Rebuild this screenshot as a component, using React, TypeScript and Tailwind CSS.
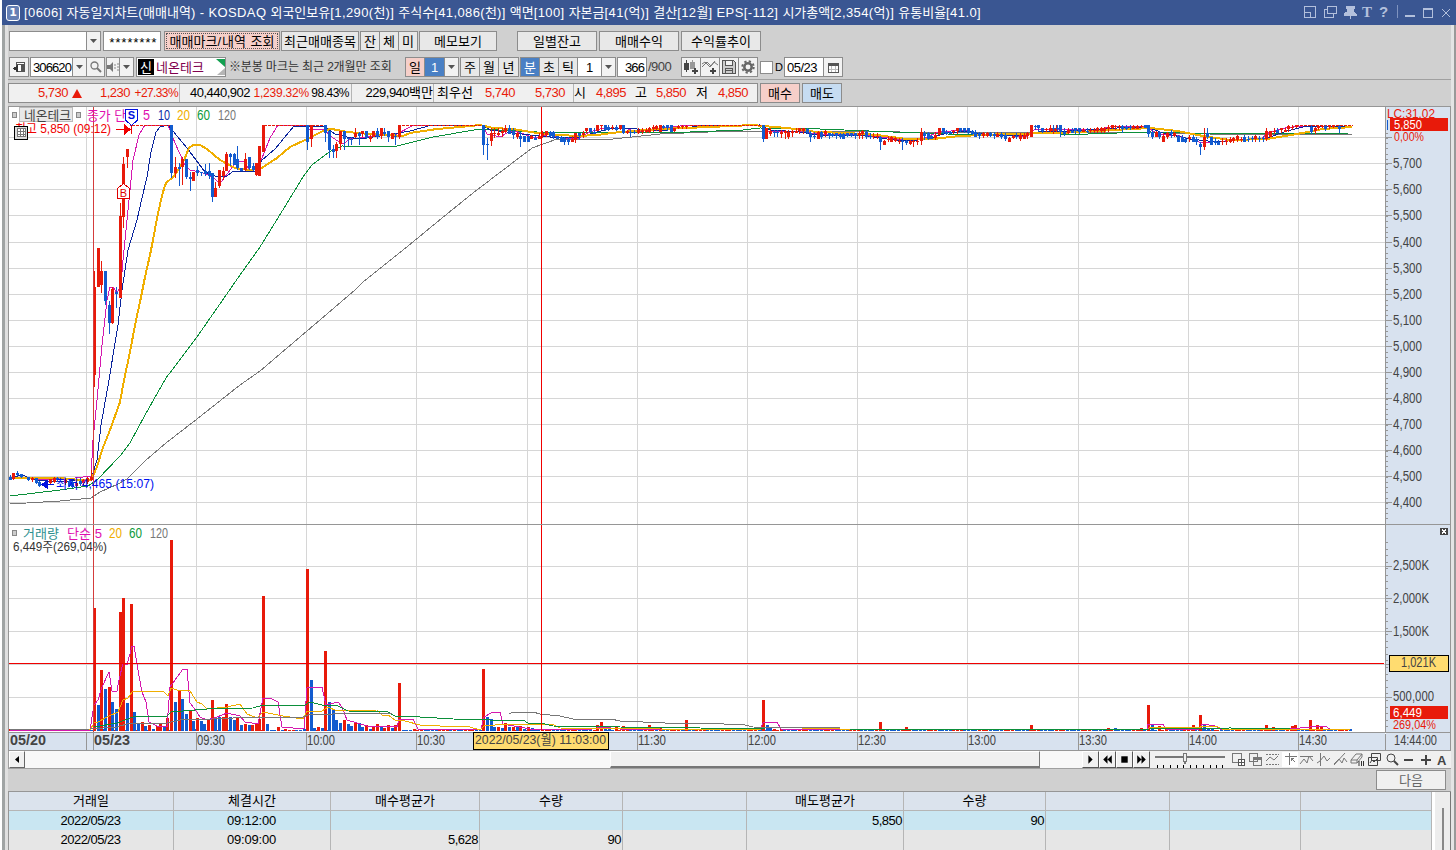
import type { ReactNode } from "react";
import clsx from "clsx";

const UP = "#e81a0a";
const DOWN = "#125bcf";

type Bar = [number, number, number, number, number, "r" | "b"];

// candles: x, body top, body bottom, wick top, wick bottom (thirds of a pixel, per block origin)
const openBars: Bar[] = [
  [283, 560, 825, 513, 860, "r"], [295, 445, 563, 445, 563, "r"], [304, 513, 555, 483, 578, "r"],
  [316, 513, 603, 513, 615, "b"], [328, 615, 670, 602, 700, "b"], [337, 567, 670, 560, 672, "r"],
  [349, 577, 584, 560, 623, "b"], [361, 348, 594, 308, 594, "r"], [370, 191, 350, 172, 385, "r"],
  [382, 148, 173, 148, 205, "r"], [394, 75, 78, 75, 103, "r"], [514, 76, 220, 76, 235, "b"],
  [526, 202, 220, 170, 232, "r"], [537, 200, 205, 190, 258, "b"], [547, 178, 203, 172, 257, "r"],
  [559, 178, 233, 178, 238, "b"], [571, 230, 235, 215, 272, "b"], [580, 215, 242, 215, 242, "r"],
  [592, 210, 218, 198, 227, "b"], [604, 217, 220, 217, 230, "b"], [616, 213, 222, 193, 230, "b"],
  [627, 213, 228, 190, 238, "b"], [637, 218, 290, 218, 305, "b"], [646, 263, 290, 247, 290, "r"],
  [658, 210, 258, 210, 265, "r"], [670, 212, 228, 200, 240, "r"], [679, 162, 213, 155, 213, "r"],
  [691, 163, 173, 160, 200, "b"], [703, 162, 195, 160, 195, "b"], [712, 178, 205, 138, 210, "b"],
  [724, 205, 213, 205, 213, "b"], [736, 178, 210, 160, 215, "r"], [747, 172, 205, 172, 212, "b"],
  [759, 198, 210, 190, 215, "b"], [770, 190, 225, 190, 228, "r"], [777, 138, 228, 138, 228, "r"],
  [31, 1130, 1138, 1125, 1140, "b"], [40, 1120, 1138, 1118, 1140, "r"], [52, 1120, 1125, 1112, 1128, "b"],
  [64, 1122, 1130, 1122, 1134, "b"], [85, 1132, 1142, 1132, 1144, "b"], [97, 1135, 1142, 1132, 1146, "r"],
  [109, 1135, 1150, 1133, 1152, "b"], [118, 1145, 1156, 1142, 1160, "b"], [152, 1138, 1150, 1136, 1154, "r"],
  [164, 1135, 1146, 1132, 1150, "r"], [173, 1135, 1142, 1130, 1145, "b"], [197, 1140, 1150, 1138, 1155, "r"],
  [208, 1142, 1158, 1140, 1162, "b"], [217, 1146, 1160, 1142, 1162, "b"], [229, 1148, 1158, 1144, 1162, "r"],
  [241, 1142, 1150, 1135, 1158, "b"], [251, 1140, 1150, 1136, 1158, "r"], [262, 1134, 1146, 1130, 1150, "r"],
  [273, 1130, 1138, 1110, 1142, "r"],
];

const morningBars: Bar[] = [
  [11, 45, 125, 45, 125, "r"], [142, 45, 97, 45, 120, "b"], [154, 45, 87, 45, 110, "r"],
  [197, 45, 70, 45, 95, "b"], [208, 63, 120, 63, 143, "b"], [220, 117, 125, 105, 143, "b"],
  [229, 103, 125, 95, 143, "r"], [242, 63, 103, 63, 120, "r"], [253, 63, 87, 63, 120, "b"],
  [265, 85, 88, 85, 108, "b"], [274, 86, 89, 80, 103, "b"], [286, 68, 80, 55, 85, "r"],
  [298, 70, 80, 65, 105, "b"], [307, 63, 72, 63, 80, "r"], [319, 63, 83, 63, 88, "b"],
  [331, 80, 87, 75, 95, "r"], [340, 63, 80, 63, 80, "r"], [352, 63, 80, 55, 87, "b"],
  [364, 55, 80, 55, 87, "r"], [374, 65, 72, 55, 80, "b"], [385, 63, 80, 63, 95, "b"],
  [397, 70, 87, 70, 87, "r"], [406, 78, 81, 70, 105, "b"], [418, 45, 80, 45, 87, "r"],
  [670, 45, 105, 45, 135, "b"], [682, 102, 105, 85, 150, "b"], [694, 70, 95, 55, 110, "r"],
  [703, 69, 72, 55, 85, "r"], [715, 68, 75, 55, 80, "r"], [727, 63, 68, 53, 80, "r"],
  [736, 53, 66, 45, 70, "r"], [748, 53, 70, 45, 70, "b"], [760, 63, 75, 55, 87, "b"],
  [772, 68, 80, 65, 85, "r"], [781, 78, 87, 65, 110, "b"], [793, 78, 95, 78, 97, "b"],
  [805, 78, 95, 78, 97, "b"], [814, 78, 87, 75, 88, "r"], [826, 83, 88, 78, 88, "b"],
  [838, 78, 87, 70, 88, "r"], [847, 70, 80, 63, 85, "r"], [859, 63, 75, 63, 80, "r"],
  [870, 65, 78, 63, 80, "b"], [880, 65, 80, 63, 88, "b"], [892, 78, 87, 78, 88, "b"],
  [904, 80, 95, 78, 95, "b"], [913, 85, 97, 80, 105, "b"], [925, 87, 95, 80, 105, "b"],
  [937, 87, 95, 78, 97, "r"], [946, 70, 90, 68, 97, "r"], [958, 70, 80, 68, 88, "b"],
  [970, 68, 75, 63, 83, "r"], [980, 55, 65, 53, 68, "r"], [992, 55, 68, 53, 68, "b"],
  [1003, 65, 70, 55, 72, "b"], [1013, 45, 63, 45, 63, "r"], [1025, 45, 48, 45, 60, "r"],
  [1037, 45, 60, 45, 62, "b"], [1046, 50, 58, 45, 62, "b"], [1058, 50, 54, 45, 60, "r"],
  [1070, 50, 60, 45, 62, "b"], [1080, 45, 57, 45, 60, "r"], [1090, 45, 70, 45, 72, "b"],
  [1103, 63, 70, 60, 72, "r"], [1112, 66, 70, 60, 82, "b"], [1124, 66, 70, 60, 72, "b"],
  [1135, 60, 70, 55, 72, "r"], [1147, 60, 66, 55, 72, "r"], [1158, 60, 66, 55, 70, "r"],
  [1169, 55, 66, 52, 70, "r"], [1180, 50, 56, 45, 66, "r"], [1190, 47, 57, 45, 62, "r"],
];

const noonBars: Bar[] = [
  [0, 45, 65, 45, 65, "r"], [11, 48, 55, 45, 58, "b"], [22, 45, 55, 45, 62, "b"], [34, 45, 66, 45, 66, "b"],
  [43, 55, 65, 53, 66, "r"], [55, 47, 52, 45, 58, "r"], [67, 49, 53, 45, 57, "r"], [79, 47, 50, 45, 57, "r"],
  [310, 45, 87, 45, 95, "b"], [319, 55, 87, 55, 87, "r"], [331, 63, 72, 55, 80, "r"], [342, 65, 68, 60, 80, "b"],
  [352, 65, 68, 60, 80, "b"], [364, 65, 70, 60, 83, "r"], [376, 63, 68, 60, 87, "r"], [385, 65, 80, 60, 87, "r"],
  [397, 63, 70, 60, 80, "r"], [409, 63, 70, 55, 70, "r"], [418, 55, 65, 53, 70, "r"], [430, 55, 63, 53, 70, "r"],
  [442, 57, 68, 53, 70, "b"], [451, 68, 80, 63, 95, "b"], [463, 77, 80, 65, 87, "b"], [475, 65, 87, 63, 87, "r"],
  [485, 65, 80, 63, 87, "b"], [497, 63, 72, 60, 80, "r"], [508, 70, 80, 68, 87, "b"], [518, 72, 78, 68, 80, "b"],
  [530, 70, 80, 68, 87, "b"], [542, 72, 80, 70, 87, "b"], [551, 72, 87, 70, 87, "b"], [563, 70, 78, 68, 80, "b"],
  [575, 70, 78, 68, 80, "b"], [587, 70, 78, 68, 87, "b"], [597, 70, 78, 63, 87, "r"], [607, 63, 72, 60, 87, "r"],
  [619, 65, 80, 60, 87, "b"], [630, 77, 80, 70, 87, "b"], [640, 77, 80, 70, 87, "r"], [652, 77, 80, 70, 87, "r"],
  [661, 80, 95, 78, 120, "b"], [673, 93, 104, 90, 104, "r"], [685, 86, 90, 78, 95, "r"], [695, 80, 95, 78, 95, "r"],
  [706, 85, 93, 80, 95, "r"], [718, 92, 95, 85, 104, "r"], [727, 94, 97, 85, 120, "b"], [740, 93, 98, 90, 105, "b"],
  [751, 93, 103, 90, 105, "r"], [760, 94, 98, 90, 110, "r"], [772, 93, 97, 85, 105, "r"], [784, 67, 95, 55, 105, "r"],
  [793, 68, 78, 63, 90, "b"], [805, 70, 87, 65, 88, "b"], [815, 78, 87, 75, 88, "b"], [826, 75, 85, 65, 88, "r"],
  [838, 55, 75, 53, 75, "r"], [850, 55, 70, 53, 72, "b"], [860, 65, 72, 60, 75, "b"], [870, 65, 70, 63, 72, "b"],
  [880, 64, 68, 60, 72, "r"], [892, 55, 65, 53, 70, "r"], [902, 55, 63, 53, 65, "b"], [914, 55, 63, 53, 68, "b"],
  [925, 55, 70, 53, 72, "b"], [937, 63, 72, 60, 75, "b"], [947, 65, 80, 60, 80, "b"], [958, 70, 80, 65, 87, "b"],
  [970, 70, 80, 65, 83, "r"], [982, 70, 80, 65, 80, "r"], [992, 70, 80, 65, 80, "b"], [1003, 72, 78, 65, 87, "b"],
  [1013, 72, 80, 65, 80, "r"], [1025, 72, 80, 65, 87, "b"], [1036, 75, 87, 70, 95, "b"], [1048, 83, 95, 80, 95, "r"],
  [1060, 78, 83, 75, 87, "r"], [1070, 77, 80, 70, 87, "b"], [1080, 75, 87, 70, 95, "r"], [1092, 75, 87, 70, 87, "r"],
  [1103, 70, 80, 65, 87, "r"], [1114, 45, 80, 45, 80, "r"], [1125, 47, 50, 45, 60, "b"], [1136, 45, 55, 45, 65, "b"],
  [1147, 55, 65, 53, 68, "b"], [1158, 58, 62, 53, 66, "r"], [1170, 55, 65, 45, 66, "r"], [1180, 56, 62, 50, 70, "r"],
  [1190, 55, 65, 45, 66, "r"],
];

const afternoonBars: Bar[] = [
  [10, 53, 57, 45, 63, "b"], [22, 53, 57, 45, 63, "b"], [31, 45, 67, 45, 80, "b"], [43, 65, 70, 55, 78, "b"],
  [55, 60, 68, 53, 70, "r"], [67, 63, 68, 55, 70, "b"], [77, 55, 65, 53, 70, "b"], [89, 55, 66, 53, 70, "b"],
  [100, 60, 65, 55, 68, "r"], [112, 62, 65, 55, 70, "b"], [122, 60, 64, 53, 68, "r"], [133, 60, 64, 53, 68, "r"],
  [143, 55, 63, 50, 68, "r"], [154, 55, 65, 50, 68, "r"], [163, 55, 65, 50, 68, "r"], [175, 50, 55, 45, 66, "r"],
  [187, 45, 55, 45, 58, "r"], [197, 47, 50, 45, 60, "r"], [208, 49, 53, 45, 60, "r"], [218, 47, 57, 45, 70, "b"],
  [230, 50, 57, 45, 60, "b"], [240, 50, 54, 45, 60, "b"], [250, 47, 55, 45, 55, "r"], [262, 47, 55, 45, 57, "r"],
  [273, 47, 50, 45, 55, "r"], [285, 45, 55, 45, 55, "b"], [296, 45, 72, 45, 80, "b"], [307, 65, 80, 60, 87, "b"],
  [318, 65, 80, 62, 80, "r"], [328, 65, 80, 62, 87, "b"], [340, 78, 95, 70, 95, "r"], [352, 70, 83, 65, 85, "r"],
  [363, 65, 72, 60, 83, "b"], [374, 70, 78, 65, 80, "r"], [386, 78, 95, 75, 95, "b"], [396, 80, 95, 75, 97, "b"],
  [407, 87, 95, 80, 97, "b"], [418, 80, 87, 75, 95, "r"], [430, 80, 95, 75, 97, "b"], [440, 87, 95, 80, 105, "b"],
  [451, 102, 110, 95, 135, "b"], [463, 80, 110, 53, 120, "r"], [473, 68, 80, 55, 87, "b"], [485, 80, 103, 80, 105, "b"],
  [497, 93, 98, 85, 105, "b"], [506, 95, 104, 90, 105, "b"], [518, 93, 96, 85, 105, "r"], [530, 93, 97, 85, 105, "r"],
  [540, 87, 95, 80, 97, "r"], [551, 85, 95, 80, 97, "r"], [562, 78, 90, 75, 95, "r"], [573, 86, 89, 80, 95, "r"],
  [584, 80, 95, 75, 95, "b"], [595, 86, 89, 78, 95, "b"], [607, 85, 88, 78, 95, "b"], [617, 78, 87, 75, 95, "r"],
  [629, 84, 88, 78, 95, "b"], [640, 84, 88, 78, 95, "b"], [650, 63, 87, 55, 95, "r"], [661, 63, 80, 63, 80, "r"],
  [672, 64, 68, 55, 72, "r"], [683, 60, 70, 55, 70, "b"], [695, 55, 62, 53, 68, "r"], [706, 60, 65, 55, 68, "r"],
  [716, 47, 57, 45, 65, "r"], [727, 50, 54, 45, 60, "r"], [738, 45, 50, 45, 55, "r"], [783, 50, 65, 45, 72, "b"],
  [795, 53, 63, 50, 70, "r"], [806, 47, 52, 45, 60, "r"], [818, 47, 50, 45, 55, "r"], [827, 47, 55, 45, 63, "b"],
  [838, 48, 52, 45, 57, "r"], [850, 47, 50, 45, 55, "r"], [868, 47, 57, 45, 70, "b"],
];

const candleBlocks = [
  { x: 0, y: 100, bars: openBars },
  { x: 260, y: 110, bars: morningBars },
  { x: 660, y: 110, bars: noonBars },
  { x: 1050, y: 110, bars: afternoonBars },
];

// stretches where the price sits at the daily limit
const limitRuns = [[132, 171], [264, 325], [402, 482], [690, 761], [1296, 1353]];

// volume: x, top, side
const volumes: [number, number, "r" | "b"][] = [
  [94, 608, "r"], [98, 705, "b"], [101, 670, "r"], [105, 689, "b"], [109, 687, "r"], [112, 702, "b"],
  [116, 709, "b"], [120, 612, "r"], [123, 598, "r"], [127, 703, "b"], [131, 604, "r"], [134, 712, "b"],
  [138, 724, "b"], [142, 722, "r"], [145, 726, "b"], [149, 725, "r"], [153, 729, "b"], [157, 726, "r"],
  [160, 724, "r"], [164, 727, "b"], [167, 718, "r"], [171, 540, "r"], [175, 702, "b"], [179, 690, "r"],
  [182, 699, "b"], [186, 714, "b"], [190, 711, "r"], [193, 721, "b"], [197, 718, "r"], [201, 721, "b"],
  [204, 724, "b"], [208, 720, "r"], [212, 700, "r"], [215, 717, "b"], [219, 717, "b"], [223, 717, "r"],
  [226, 704, "r"], [230, 717, "b"], [234, 720, "b"], [237, 717, "r"], [241, 725, "b"], [245, 724, "r"],
  [249, 725, "b"], [252, 725, "r"], [256, 724, "r"], [259, 719, "r"], [263, 596, "r"], [267, 724, "b"],
  [278, 727, "r"], [307, 569, "r"], [311, 680, "b"], [314, 728, "b"], [318, 727, "r"], [322, 728, "b"],
  [325, 651, "r"], [329, 702, "b"], [333, 709, "b"], [336, 720, "b"], [340, 723, "b"], [344, 720, "r"],
  [348, 724, "b"], [351, 726, "b"], [355, 723, "r"], [359, 723, "b"], [362, 727, "b"], [366, 725, "r"],
  [370, 729, "b"], [373, 727, "r"], [377, 724, "r"], [381, 727, "b"], [384, 728, "r"], [388, 725, "r"],
  [392, 728, "b"], [395, 725, "r"], [399, 683, "r"], [454, 729, "r"], [458, 729, "b"], [483, 669, "r"],
  [487, 717, "b"], [491, 719, "b"], [494, 727, "b"], [498, 727, "r"], [502, 728, "b"], [505, 723, "r"],
  [509, 727, "b"], [513, 727, "r"], [517, 727, "b"], [520, 726, "r"], [524, 729, "b"], [528, 727, "r"],
  [532, 728, "b"], [583, 728, "b"], [597, 725, "r"], [601, 722, "r"], [605, 726, "b"], [609, 728, "b"],
  [616, 727, "r"], [623, 726, "r"], [649, 725, "r"], [660, 727, "r"], [686, 720, "r"], [763, 700, "r"],
  [767, 725, "b"], [770, 728, "b"], [774, 729, "r"], [880, 722, "r"], [906, 727, "r"], [1031, 725, "r"],
  [1108, 728, "r"], [1115, 728, "b"], [1141, 728, "r"], [1148, 705, "r"], [1152, 725, "b"], [1159, 726, "r"],
  [1193, 725, "r"], [1200, 715, "r"], [1204, 725, "b"], [1208, 728, "b"], [1212, 728, "b"], [1266, 725, "r"],
  [1273, 727, "r"], [1292, 726, "r"], [1295, 725, "r"], [1310, 720, "r"], [1317, 725, "r"], [1321, 727, "r"],
];

const quietBars = Array.from({ length: 366 }, (_, i) => ({
  x: Math.round(9 + i * 3.67),
  h: (i * 7) % 5 === 0 ? 3 : 2,
  color: (i * 13) % 7 < 3 ? UP : DOWN,
}));

const priceLines = [
  { color: "#777777", width: 1, points: "10,504 60,501 91,498 100,492 118,484 127,479 145,461 166,443 197,419 240,385 260,371 307,331 355,290 363,282 408,246 442,218 473,193 490,180 532,148 557,139 613,139 660,134 732,131 893,131 900,132 1120,132 1210,134 1352,134" },
  { color: "#0b8f3a", width: 1, points: "10,496 60,490 88,486 97,480 120,456 130,443 145,415 166,378 197,337 240,275 260,247 281,213 303,177 312,165 329,152 342,146 393,147 433,137 480,129 537,132 660,132 690,132 743,130 760,128 820,129 893,132 947,134 1007,135 1060,135 1117,133 1150,132 1230,134 1350,133" },
  { color: "#d518ae", width: 1, points: "10,478 60,480 91,476 93,440 97,400 102,345 107,300 110,287 113,287 117,293 121,285 123,260 128,210 133,160 139,135 145,125 168,125 175,143 185,165 190,170 200,172 213,177 217,181 222,181 228,173 235,163 243,161 250,170 259,165 262,158 270,138 278,125 305,125 308,129 323,129 333,138 343,144 350,139 360,138 375,136 395,135 412,126 420,125 482,125 487,134 500,137 507,133 515,131 535,138 550,134 560,138 577,139 590,132 603,128 625,128 637,132 660,128 690,125 761,125 766,131 795,131 817,134 860,135 880,137 912,141 925,138 938,132 965,130 983,135 1015,136 1028,136 1035,129 1070,130 1100,129 1115,126 1145,126 1158,134 1180,136 1202,143 1225,141 1262,138 1270,132 1285,128 1300,126 1352,126" },
  { color: "#0a249c", width: 1, points: "10,478 22,475 35,480 60,482 91,479 97,460 101,425 109,380 118,325 122,290 128,250 137,220 142,198 147,177 151,152 156,132 160,127 168,125 187,148 205,172 217,177 227,176 232,172 257,171 262,160 275,149 294,126 325,127 335,134 347,137 360,139 373,137 393,134 410,131 432,125 482,125 490,130 507,132 530,135 550,137 577,138 593,133 613,128 637,129 660,131 700,126 760,125 770,130 800,132 817,135 860,135 887,139 907,141 927,139 947,133 967,131 987,135 1023,136 1043,131 1070,131 1117,128 1147,127 1163,133 1190,139 1217,142 1250,139 1267,138 1287,131 1303,127 1352,126" },
  { color: "#f0ae00", width: 2, points: "10,478 60,478 80,480 91,480 97,467 102,450 110,430 120,402 124,380 130,352 135,325 140,302 145,277 150,255 153,240 157,218 161,200 165,185 167,182 172,178 177,172 184,160 189,148 193,145 200,145 207,149 220,160 235,168 248,170 260,169 277,158 290,147 303,141 325,130 332,129 347,132 370,134 403,136 410,133 437,129 460,127 480,125 493,128 513,129 537,133 560,135 577,136 597,135 620,132 660,129 710,127 753,125 763,126 787,128 817,132 847,133 877,135 907,139 933,139 960,136 1007,134 1060,133 1097,131 1150,128 1177,131 1203,136 1230,140 1267,139 1297,134 1323,129 1352,127" },
];

const volumeLines = [
  { color: "#d518ae", points: "10,730 90,730 94,705 98,700 102,687 109,672 112,691 117,691 119,680 123,663 127,665 132,646 134,646 138,670 142,692 146,702 149,722 157,726 167,727 170,687 183,669 187,669 190,703 197,712 200,717 207,720 217,717 227,713 240,716 245,722 258,724 263,698 272,699 278,702 282,727 304,729 307,688 312,687 322,687 326,705 338,702 342,707 347,720 357,723 367,726 397,727 399,719 413,719 418,729 481,729 484,717 493,712 500,712 503,724 530,729 592,729 602,727 620,729 760,729 763,723 777,722 781,729 1147,729 1148,724 1163,724 1166,729 1199,729 1202,724 1215,726 1220,729 1290,729 1310,727 1325,726 1330,729" },
  { color: "#f0ae00", points: "10,729 90,730 94,723 98,722 107,717 118,712 123,700 128,698 132,692 163,691 168,696 171,688 177,690 190,691 197,702 202,704 207,709 227,707 240,704 247,714 257,718 263,712 283,716 303,719 307,711 322,711 328,707 337,711 377,710 383,716 388,715 395,720 405,721 420,725 440,726 470,727 480,730 484,726 507,724 552,724 560,728 760,730 764,727 840,729 1147,730 1150,727 1187,727 1199,728 1202,726 1218,727 1222,729 1350,729" },
  { color: "#0b8f3a", points: "94,727 117,723 133,717 167,716 171,712 183,711 207,709 253,708 263,705 305,705 310,702 322,705 338,706 348,711 388,712 395,716 420,717 453,719 490,720 523,720 528,723 541,723 553,726 620,727 700,728 765,729 850,729 1060,730 1150,729 1230,728 1290,729 1350,729" },
  { color: "#777777", points: "10,730 90,729 117,727 130,723 167,723 180,720 213,719 253,717 303,717 308,715 333,714 393,713 511,713 515,712 533,712 540,714 560,716 573,719 611,719 620,721 665,723 702,723 745,725 753,727 840,728 1350,728" },
];

const times = ["09:30", "10:00", "10:30", "11:00", "11:30", "12:00", "12:30", "13:00", "13:30", "14:00", "14:30"];
const timeX = [196, 306, 416, 527, 637, 747, 857, 967, 1078, 1188, 1298];
const prices = [5800, 5700, 5600, 5500, 5400, 5300, 5200, 5100, 5000, 4900, 4800, 4700, 4600, 4500, 4400];
const priceY = (p: number) => Math.round(502 - ((p - 4400) / 100) * 26.05);
const volY = [566, 598, 631, 664, 697];

type LabelProps = { x: number; y: number; w?: number; size?: number; fill?: string; bold?: boolean; children: string };

function Label({ x, y, w, size = 14, fill = "#444", bold, children }: LabelProps) {
  return (
    <text x={x} y={y} fill={fill} fontSize={size} textLength={w} lengthAdjust="spacingAndGlyphs" fontWeight={bold ? 700 : 400}>
      {children}
    </text>
  );
}

function Chart() {
  return (
    <svg
      width="1443"
      height="645"
      viewBox="8 106 1443 645"
      shapeRendering="crispEdges"
      className="block font-['Liberation_Sans','Noto_Sans_CJK_KR',sans-serif]"
    >
      <rect x="8" y="106" width="1443" height="645" fill="#fff" />
      <rect x="1386" y="107" width="65" height="643" fill="#d8e2ef" />
      <rect x="9" y="733" width="1376" height="17" fill="#d8e2ef" />

      <g fill="#d6d6d6">
        {prices.map((p) => <rect key={p} x="9" y={priceY(p)} width="1376" height="1" />)}
        {volY.map((y) => <rect key={y} x="9" y={y} width="1376" height="1" />)}
        <rect x="86" y="107" width="1" height="624" />
        {timeX.map((x) => <rect key={x} x={x} y="107" width="1" height="624" />)}
      </g>

      {priceLines.map((l) => (
        <polyline key={l.color} points={l.points} fill="none" stroke={l.color} strokeWidth={l.width} />
      ))}
      {limitRuns.map(([a, b]) => (
        <line key={a} x1={a} x2={b} y1="125.5" y2="125.5" stroke={UP} strokeDasharray="3 1" />
      ))}
      {candleBlocks.map((block) =>
        block.bars.map(([x, t, b, wt, wb, c]) => {
          const cx = Math.round(block.x + (x - 1) / 3);
          const fill = c === "r" ? UP : DOWN;
          return (
            <g key={`${block.x}-${x}`} fill={fill}>
              <rect x={cx} y={Math.round(block.y + wt / 3)} width="1" height={Math.max(1, Math.round((wb - wt) / 3))} />
              <rect x={cx - 1} y={Math.round(block.y + t / 3)} width="3" height={Math.max(1, Math.round((b - t) / 3))} />
            </g>
          );
        }),
      )}

      {quietBars.map((q) => <rect key={q.x} x={q.x} y={731 - q.h + 1} width="3" height={q.h - 1} fill={q.color} />)}
      {volumes.map(([x, y, c]) => (
        <rect key={x} x={x - 1} y={y} width="3" height={731 - y} fill={c === "r" ? UP : DOWN} />
      ))}
      {volumeLines.map((l) => <polyline key={l.color} points={l.points} fill="none" stroke={l.color} />)}

      {/* crosshair and day divider */}
      <rect x="93" y="107" width="1" height="643" fill="#d43c3c" />
      <rect x="541" y="107" width="1" height="624" fill="#f00000" />
      <rect x="9" y="663" width="1375" height="1" fill="#f00000" />

      {/* frame */}
      <g fill="#969696">
        <rect x="8" y="106" width="1443" height="1" />
        <rect x="8" y="106" width="1" height="645" />
        <rect x="1450" y="106" width="1" height="645" />
        <rect x="1385" y="106" width="1" height="626" />
        <rect x="1385" y="734" width="1" height="16" />
        <rect x="8" y="524" width="1443" height="1" />
        <rect x="8" y="732" width="1443" height="1" />
        <rect x="8" y="750" width="1443" height="1" />
        <rect x="86" y="732" width="1" height="18" />
        <rect x="93" y="732" width="1" height="18" />
        {timeX.map((x) => <rect key={x} x={x} y="732" width="1" height="18" />)}
        {prices.map((p) => <rect key={p} x="1386" y={priceY(p)} width="6" height="1" />)}
        {Array.from({ length: 75 }, (_, i) => <rect key={i} x="1386" y={Math.round(132.8 + i * 5.21)} width="2" height="1" />)}
        {volY.map((y) => <rect key={y} x="1386" y={y} width="6" height="1" />)}
        {Array.from({ length: 29 }, (_, i) => <rect key={i} x="1386" y={Math.round(542 + i * 6.58)} width="2" height="1" />)}
      </g>

      {/* price axis */}
      <Label x={1387} y={118} w={48} size={13} fill={UP}>LC:31.02</Label>
      <rect x="1390" y="118" width="58" height="13" fill={UP} />
      <Label x={1394} y={129} w={28} size={13} fill="#fff">5,850</Label>
      <Label x={1394} y={141} w={30} size={13} fill={UP}>0,00%</Label>
      <rect x="1387" y="120" width="1" height="10" fill={DOWN} />
      {prices.slice(1).map((p) => (
        <Label key={p} x={1393} y={priceY(p) + 5} w={29}>{`${Math.floor(p / 1000)},${String(p % 1000).padStart(3, "0")}`}</Label>
      ))}

      {/* volume axis */}
      <rect x="1440" y="528" width="8" height="7" fill="#444" />
      <path d="M1442 529.5l4 4m0 -4l-4 4" stroke="#fff" />
      <Label x={1393} y={570} w={36}>2,500K</Label>
      <Label x={1393} y={603} w={36}>2,000K</Label>
      <Label x={1393} y={636} w={36}>1,500K</Label>
      <rect x="1389.5" y="655.5" width="59" height="16" fill="#ffdc70" stroke="#000" />
      <Label x={1401} y={667} w={35}>1,021K</Label>
      <Label x={1393} y={701} w={41}>500,000</Label>
      <rect x="1390" y="706" width="58" height="13" fill={UP} />
      <Label x={1393} y={717} w={29} size={13} fill="#fff">6,449</Label>
      <Label x={1393} y={729} w={43} size={13} fill={UP}>269,04%</Label>

      {/* time axis */}
      <Label x={10} y={745} w={36} bold>05/20</Label>
      <Label x={94} y={745} w={36} bold>05/23</Label>
      {times.map((t, i) => t !== "11:00" && <Label key={t} x={timeX[i] + 1} y={745} w={28}>{t}</Label>)}
      <Label x={1394} y={745} w={43}>14:44:00</Label>
      <rect x="473.5" y="732.5" width="135" height="17" fill="#ffdc70" stroke="#000" />
      <Label x={475} y={744} w={131} size={13}>2022/05/23(월) 11:03:00</Label>

      {/* legends */}
      <rect x="12.5" y="112.5" width="4" height="5" fill="#ccc" stroke="#888" />
      <rect x="76.5" y="112.5" width="4" height="5" fill="#ccc" stroke="#888" />
      <rect x="19.5" y="107.5" width="53" height="14" fill="#e8e8e8" stroke="#bbb" />
      <Label x={24} y={120} w={47} size={13}>네온테크</Label>
      <Label x={87} y={120} w={39} size={13} fill="#e010b0">종가 단</Label>
      <Label x={143} y={120} w={7} fill="#e010b0">5</Label>
      <Label x={158} y={120} w={12} fill="#0a2aa8">10</Label>
      <Label x={177} y={120} w={13} fill="#f0ae00">20</Label>
      <Label x={197} y={120} w={13} fill="#0b9a3a">60</Label>
      <Label x={218} y={120} w={18} fill="#777">120</Label>
      <Label x={15} y={133} w={96} size={13} fill="#f00000">최고 5,850 (09:12)</Label>
      <path d="M116 129.5h10M131.500 125v8" stroke="#f00000" />
      <path d="M124 124l7 5.500l-7 5.500z" fill="#f00000" />
      <rect x="14.500" y="126.500" width="13" height="13" fill="#ddd" stroke="#000" />
      <path d="M17.500 128.500h8v8h-8zM20.500 128.500v8M23.500 128.500v8M17.500 131.500h8M17.500 134.500h8" fill="#fff" stroke="#777" />
      <path d="M125.500 109.500h12v10.500l-6 5.500l-6 -5.500z" fill="#fff" stroke="#0010e0" />
      <text x="131.500" y="119" fontSize="11" fontWeight="700" textAnchor="middle" fill="#0010e0">S</text>
      <path d="M117.500 198.500v-10l6 -5l6 5v10z" fill="#fff" stroke="#e00000" />
      <text x="123.500" y="197" fontSize="11" textAnchor="middle" fill="#e00000">B</text>
      <path d="M41 484.500l7 -5v10z" fill="#0010e0" />
      <path d="M47 484.500h7" stroke="#0010e0" />
      <Label x={56} y={488} w={98} size={13} fill="#0010f0">최저 4,465 (15:07)</Label>

      <rect x="12.500" y="530.500" width="4" height="5" fill="#ccc" stroke="#888" />
      <Label x={23} y={538} w={36} size={13} fill="#2e9090">거래량</Label>
      <Label x={67} y={538} w={35} size={13} fill="#e010b0">단순 5</Label>
      <Label x={109} y={538} w={13} fill="#f0ae00">20</Label>
      <Label x={129} y={538} w={13} fill="#0b9a3a">60</Label>
      <Label x={150} y={538} w={18} fill="#777">120</Label>
      <Label x={13} y={551} w={94} size={13} fill="#333">6,449주(269,04%)</Label>
    </svg>
  );
}

// Hangul keeps its full advance, Latin and digits take the run's tracking
function T({ children, className, tight = "tracking-[-0.5px]" }: { children: string; className?: string; tight?: string }) {
  return (
    <span className={clsx("whitespace-pre", tight, className)}>
      {children.split(/([가-힣]+)/).map((run, i) => (i % 2 ? <span key={i} className="tracking-normal">{run}</span> : run))}
    </span>
  );
}

function Btn({ children, className }: { children?: ReactNode; className?: string }) {
  return (
    <div className={clsx("flex h-5 shrink-0 items-center justify-center border border-[#8c8c8c]", className)}>{children}</div>
  );
}

function Arrow() {
  return (
    <div className="flex h-full w-3.5 shrink-0 items-center justify-center border-l border-[#8c8c8c] bg-[#f2f2f2]">
      <svg width="7" height="4" viewBox="0 0 7 4"><path d="M0 0h7L3.500 4z" fill="#555" /></svg>
    </div>
  );
}

function TitleBar() {
  return (
    <div className="flex h-[25px] items-center bg-[#3a5692] pl-1 text-white">
      <div className="flex h-4 w-[14px] items-center justify-center rounded-[3px] border border-white bg-[#6580b5] font-['DejaVu_Sans'] text-[11px] font-bold">1</div>
      <T className="ml-1" tight="tracking-[0.4px]">[0606] 자동일지차트(매매내역) - KOSDAQ 외국인보유[1,290(천)] 주식수[41,086(천)] 액면[100] 자본금[41(억)] 결산[12월] EPS[-112] 시가총액[2,354(억)] 유통비율[41.0]</T>
      <svg className="ml-auto" width="154" height="25" viewBox="1302 0 154 25" fill="none" stroke="#b3c0dc" strokeWidth="1" shapeRendering="crispEdges">
        <path d="M1304.500 6.500h11v11h-11zM1304.500 12.500h6v5" />
        <path d="M1327.500 6.500h9v7h-9zM1327.500 9.500h-3v8h9v-4" />
        <path d="M1346 6h8v2h-1v4l3 2v1h-12v-1l3-2v-4h-1zM1350 15v4" fill="#b3c0dc" />
        <path d="M1397.500 5v13" stroke="#7f93bf" />
        <path d="M1405 16h10M1405 15h10" />
        <path d="M1423.500 8.500h9v9h-9zM1423 9.500h10" />
        <path d="M1442 9l8 8m0-8l-8 8" shapeRendering="auto" />
        <text x="1362" y="17" fontSize="15" fontWeight="700" fill="#b3c0dc" stroke="none" fontFamily="Liberation Serif">T</text>
        <text x="1379" y="17" fontSize="15" fontWeight="700" fill="#b3c0dc" stroke="none" fontFamily="Liberation Sans">?</text>
      </svg>
    </div>
  );
}

function AccountRow() {
  return (
    <div className="flex h-[26px] items-end">
      <Btn className="mr-0.5 w-[92px] justify-end! bg-white"><Arrow /></Btn>
      <Btn className="mr-[3px] w-[58px] bg-white"><span className="pt-1 font-['Liberation_Mono'] tracking-[-1.8px]">********</span></Btn>
      <Btn className="mr-px w-[116px] bg-[#f6cfc9]">
        <div className="flex h-4 w-28 items-center justify-center border border-dotted border-[#555]"><T tight="tracking-[1px]">매매마크/내역 조회</T></div>
      </Btn>
      <Btn className="mr-px w-[78px] bg-[#e8e8e8]"><T>최근매매종목</T></Btn>
      <Btn className="w-5 bg-[#e8e8e8]"><T>잔</T></Btn>
      <Btn className="-ml-px w-5 bg-[#e8e8e8]"><T>체</T></Btn>
      <Btn className="-ml-px mr-px w-5 bg-[#e8e8e8]"><T>미</T></Btn>
      <Btn className="mr-5 w-[78px] bg-[#e8e8e8]"><T>메모보기</T></Btn>
      <Btn className="mr-0.5 w-20 bg-[#e8e8e8]"><T>일별잔고</T></Btn>
      <Btn className="mr-0.5 w-20 bg-[#e8e8e8]"><T>매매수익</T></Btn>
      <Btn className="w-20 bg-[#e8e8e8]"><T>수익률추이</T></Btn>
    </div>
  );
}

function StockRow() {
  return (
    <div className="flex h-[26px] items-end">
      <Btn className="w-5 bg-[#f2f2f2]">
        <svg width="14" height="14" viewBox="0 0 14 14" shapeRendering="crispEdges"><path d="M4.500 2.500h8v9h-8zM4 4.500h9" fill="#fff" stroke="#555" /><path d="M9 5h4v6H9z" fill="#555" /><path d="M6 5v7L1 8.500z" fill="#333" /></svg>
      </Btn>
      <Btn className="ml-px mr-px w-[75px] justify-between! bg-white">
        <T className="pl-0.5" tight="tracking-[-0.9px]">306620</T>
        <div className="flex h-full"><Arrow />
          <div className="flex w-[18px] items-center justify-center border-l border-[#8c8c8c] bg-[#f2f2f2]">
            <svg width="12" height="12" viewBox="0 0 12 12" fill="none" stroke="#777" strokeWidth="1.3"><circle cx="4.500" cy="4.500" r="3.500" /><path d="M7 7l4 4" strokeWidth="2" /></svg>
          </div>
        </div>
      </Btn>
      <Btn className="w-7 bg-[#f2f2f2]">
        <svg width="12" height="12" viewBox="0 0 12 12"><path d="M0 4h3l3-3v10L3 8H0z" fill="#777" /><path d="M8 3v6M11 2v8" stroke="#888" strokeDasharray="2 1" /></svg>
        <Arrow />
      </Btn>
      <Btn className="ml-0.5 w-[90px] justify-start! bg-white">
        <span className="ml-px flex h-4 w-4 items-center justify-center bg-black text-white">신</span>
        <span className="ml-0.5 text-[#80004e]">네온테크</span>
        <svg className="ml-auto" width="9" height="18" viewBox="0 0 9 18"><path d="M0 1h9v8z" fill="#12a050" /><path d="M9 10v7H1z" fill="#b5b5b5" /></svg>
      </Btn>
      <T className="ml-[3px] w-[176px] text-[12px] leading-5 text-[#333]" tight="tracking-[-0.3px]">※분봉 마크는 최근 2개월만 조회</T>
      <Btn className="w-5 bg-[#f6cfc9]">일</Btn>
      <Btn className="-ml-px w-[35px] bg-[#4a80c4] text-white"><span className="flex-1 text-center">1</span><Arrow /></Btn>
      <Btn className="ml-px w-5 bg-[#e8e8e8]">주</Btn>
      <Btn className="-ml-px w-5 bg-[#e8e8e8]">월</Btn>
      <Btn className="-ml-px w-[21px] bg-[#e8e8e8]">년</Btn>
      <Btn className="ml-px w-5 bg-[#4a80c4] text-white">분</Btn>
      <Btn className="-ml-px w-5 bg-[#e8e8e8]">초</Btn>
      <Btn className="-ml-px w-5 bg-[#e8e8e8]">틱</Btn>
      <Btn className="-ml-px w-[39px] bg-white"><span className="flex-1 text-center">1</span><Arrow /></Btn>
      <Btn className="ml-px w-[30px] justify-end! bg-white"><T className="pr-0.5" tight="tracking-[-0.9px]">366</T></Btn>
      <T className="w-[34px] pl-px leading-5 text-[#444]">/900</T>
      <Btn className="w-5 bg-[#f2f2f2]">
        <svg width="16" height="16" viewBox="0 0 16 16" shapeRendering="crispEdges"><path d="M1 4h4v6H1zM3 1v12" fill="#444" stroke="#444" strokeWidth="1" /><path d="M7 3h4v6H7zM9 1v9" fill="#999" stroke="#999" /><path d="M9 12h6M12 9v6" stroke="#444" strokeWidth="2" /></svg>
      </Btn>
      <Btn className="-ml-px w-5 bg-[#f2f2f2]">
        <svg width="16" height="16" viewBox="0 0 16 16" fill="none" stroke="#777"><path d="M0 5l3-2l5 5l4-5l4 3M0 8l5-5l4 4l4-5" /><path d="M8 12h6M11 9v6" stroke="#444" strokeWidth="2" /></svg>
      </Btn>
      <Btn className="-ml-px w-5 bg-[#f2f2f2]">
        <svg width="14" height="14" viewBox="0 0 14 14" shapeRendering="crispEdges" fill="#ccc" stroke="#555"><path d="M.500.500h11l2 2v11h-13zM3.500.500v5h7v-5M3.500 13.500v-5h7v5M4 10.500h6" /></svg>
      </Btn>
      <Btn className="-ml-px w-5 bg-[#f2f2f2]">
        <svg width="14" height="14" viewBox="0 0 14 14" fill="none" stroke="#666"><circle cx="7" cy="7" r="3.700" strokeWidth="2.500" /><circle cx="7" cy="7" r="5.700" strokeWidth="2" strokeDasharray="2.240 2.240" /></svg>
      </Btn>
      <div className="mb-[3px] ml-0.5 size-[13px] border border-[#8c8c8c] bg-white" />
      <span className="ml-0.5 w-[9px] text-[11px] leading-5">D</span>
      <Btn className="w-[59px] justify-between! bg-white">
        <T className="pl-0.5">05/23</T>
        <div className="flex h-full w-[19px] items-center justify-center border-l border-[#8c8c8c] bg-[#f2f2f2]">
          <svg width="11" height="11" viewBox="0 0 11 11" shapeRendering="crispEdges"><path d="M.500 1.500h10v9h-10z" fill="#fff" stroke="#555" /><path d="M0 1h11v3H0z" fill="#555" /><path d="M3.500 4v6M7.500 4v6M1 7.500h9" stroke="#bbb" /></svg>
        </div>
      </Btn>
    </div>
  );
}

function QuoteRow() {
  return (
    <div className="flex h-[27px] items-center border-t border-[#a0a0a0]">
      <div className="flex h-5 w-[750px] items-center border border-[#8c8c8c] bg-[#f0f0f0] leading-[18px] text-[#e81a0a]">
        <T className="w-[59px] text-right">5,730</T>
        <svg className="ml-1" width="10" height="9" viewBox="0 0 10 9"><path d="M5 0l5 9H0z" fill="#e81a0a" /></svg>
        <T className="w-12 text-right">1,230</T>
        <T className="h-[18px] w-[50px] border-r border-[#b5b5b5] pr-px text-right text-[12px]" tight="tracking-[-0.6px]">+27.33%</T>
        <T className="w-[70px] text-right text-black">40,440,902</T>
        <T className="w-[59px] text-right text-[12px]" tight="tracking-[-0.2px]">1,239.32%</T>
        <T className="h-[18px] w-[43px] border-r border-[#b5b5b5] pr-0.5 text-right text-[12px] text-black" tight="tracking-[-0.5px]">98.43%</T>
        <T className="h-[18px] w-[82px] border-r border-[#b5b5b5] text-right text-black">229,940백만</T>
        <T className="w-[39px] pl-[3px] text-black">최우선</T>
        <T className="w-[42px] text-right">5,740</T>
        <T className="h-[18px] w-[59px] border-r border-[#b5b5b5] pr-2 text-right">5,730</T>
        <T className="w-[13px] text-black">시</T>
        <T className="w-[39px] text-right">4,895</T>
        <T className="ml-[9px] w-3 text-black">고</T>
        <T className="w-[39px] text-right">5,850</T>
        <T className="ml-2.5 w-3 text-black">저</T>
        <T className="w-10 text-right">4,850</T>
      </div>
      <Btn className="ml-0.5 w-10 bg-[#f6cfc9]">매수</Btn>
      <Btn className="ml-0.5 w-10 bg-[#c6dcf2]">매도</Btn>
    </div>
  );
}

const playIcons = ["M6 4v8l4-4z", "M8 4v8L4 8zM12 4v8L8 8z", "M5 5h6v6H5z", "M4 4v8l4-4zM8 4v8l4-4z"];

function ScrollRow() {
  return (
    <div className="flex h-[18px] border-b border-l border-[#a0a0a0] bg-[#f0f0f0]">
      <Btn className="h-[17px]! w-4 border-b-[#666]! border-l-white! border-r-[#666]! border-t-white! bg-[#f0f0f0]">
        <svg width="4" height="7" viewBox="0 0 4 7"><path d="M4 0v7L0 3.500z" /></svg>
      </Btn>
      <div className="flex h-[17px] w-[1057px] bg-[#f8f8f8]">
        <div className="ml-[585px] w-[430px] border border-b-2 border-b-[#777] border-l-white border-r-[#777] border-t-white bg-[#f0f0f0]" />
      </div>
      {playIcons.map((d) => (
        <Btn key={d} className="h-[17px]! w-[17px] border-b-[#555]! border-l-white! border-r-[#555]! border-t-white! bg-[#f0f0f0]">
          <svg width="15" height="15" viewBox="1 1 14 14"><path d={d} /></svg>
        </Btn>
      ))}
      <svg width="301" height="17" viewBox="1150 751 301 17" fill="none" stroke="#777" shapeRendering="crispEdges">
        <path d="M1155 756.500h70" strokeWidth="2" />
        <path d="M1157.500 765v3M1163.500 765v3M1170.500 765v3M1177.500 765v3M1183.500 765v3M1190.500 765v3M1196.500 765v3M1203.500 765v3M1210.500 765v3M1216.500 765v3M1222.500 765v3" stroke="#000" />
        <path d="M1183.500 753.500h3v7l-1.500 3l-1.500-3z" fill="#f0f0f0" />
        <path d="M1232.500 753.500h9v9h-9z" /><path d="M1238.500 759.500h6v6h-6zM1241.500 759.500v6M1238.500 762.500h6" fill="#fff" stroke="#555" />
        <path d="M1249.500 753.500h8v8h-8zM1253.500 757.500h8v8h-8z" fill="#f0f0f0" /><path d="M1253 758.500h9" strokeWidth="2" />
        <path d="M1266 754.500h13M1266 764.500h13" strokeDasharray="2 1" /><path d="M1266 761l4-4l4 3l4-4" shapeRendering="auto" />
        <rect x="1282" y="752" width="16" height="15" fill="#fff" stroke="none" /><path d="M1285 756.500h12M1289.500 753v12M1291 758l4 4M1291 758.500h3M1291.500 758v3" />
        <g shapeRendering="auto">
          <path d="M1300 756.500h13M1300 764l4-5l3 4l2-7l4 5" />
          <path d="M1320.500 753v13M1317 763l3-2l4-5l3 5l3-3" />
          <path d="M1334 765l11-12M1334 764l5-5l3 4l2-5l3 4" />
          <path d="M1351 760l5-6h6l-5 6zM1351 760v3h6v-3M1357 763l5-6v-3" /><path d="M1359 766v-5M1361.500 766v-5M1363.500 766v-5" stroke="#333" />
          <path d="M1371.500 753.500h9v7h-9zM1368.500 757.500h9v8h-9z" fill="#f0f0f0" stroke="#444" /><path d="M1370 763l2-3l2 2l3-3" stroke="#444" />
          <circle cx="1391" cy="758" r="4" stroke="#444" /><path d="M1394 761l4 4" strokeWidth="2" stroke="#444" />
          <path d="M1404 760h9M1421 760h10M1426 755v10" strokeWidth="2" stroke="#444" />
          <text x="1437" y="765" fontSize="13" fontWeight="700" fill="#444" stroke="none" fontFamily="Liberation Sans">A</text>
        </g>
      </svg>
    </div>
  );
}

const columns = [
  { w: "w-[165px]", head: "거래일", align: "text-center" },
  { w: "w-[157px]", head: "체결시간", align: "text-center" },
  { w: "w-[149px]", head: "매수평균가", align: "text-right" },
  { w: "w-[143px]", head: "수량", align: "text-right" },
  { w: "w-[124px]", head: "", align: "text-right" },
  { w: "w-[157px]", head: "매도평균가", align: "text-right" },
  { w: "w-[142px]", head: "수량", align: "text-right" },
  { w: "w-[124px]", head: "", align: "text-right" },
  { w: "w-[131px]", head: "", align: "text-right" },
  { w: "w-[131px]", head: "", align: "text-right" },
];

const rows = [
  ["2022/05/23", "09:12:00", "", "", "", "5,850", "90", "", "", ""],
  ["2022/05/23", "09:09:00", "5,628", "90", "", "", "", "", "", ""],
];

function TradeTable() {
  return (
    <div className="flex h-[59px] overflow-hidden border-l border-t border-[#969696]">
      <div className="flex flex-col">
        <div className="flex h-[19px] border-b border-[#b5b5b5] bg-[#dbe3ed]">
          {columns.map((c, i) => (
            <div key={i} className={clsx("border-r border-[#b5b5b5] text-center leading-[18px]", c.w)}>{c.head}</div>
          ))}
        </div>
        {rows.map((r, n) => (
          <div key={n} className={clsx("flex", n === 0 ? "h-[19px] bg-[#c9e6f2]" : "h-5 bg-[#e6e6e6]")}>
            {columns.map((c, i) => (
              <div key={i} className={clsx("border-r border-[#b5b5b5] pr-px leading-[19px]", c.w, c.align)}>
                <T tight={i === 1 ? "tracking-[-0.2px]" : "tracking-[-0.5px]"}>{r[i]}</T>
              </div>
            ))}
          </div>
        ))}
      </div>
      <div className="w-[3px] bg-white" />
      <div className="flex flex-1 justify-center border-r border-[#777] bg-[#ededed] pt-4">
        <div className="w-0.5 bg-[#888]" />
      </div>
    </div>
  );
}

export default function App() {
  return (
    <div className="flex h-[850px] w-[1456px] overflow-hidden bg-[#d0d0d0] font-['Liberation_Sans','Noto_Sans_CJK_KR',sans-serif] text-[13px] leading-none text-black">
      <div className="w-0.5 bg-white" />
      <div className="flex flex-1 flex-col">
        <TitleBar />
        <div className="flex flex-1">
          <div className="w-[3px] bg-[#a0a4a4]" />
          <div className="w-[3px] bg-[#e0e0e0]" />
          <div className="w-[1443px]">
            <div className="pl-px"><AccountRow /></div>
            <div className="h-[28px] pl-px"><StockRow /></div>
            <QuoteRow />
            <Chart />
            <ScrollRow />
            <div className="flex h-[22px] items-center justify-end pr-[5px]">
              <Btn className="w-[70px] bg-[#f0f0f0] text-[#666]">다음</Btn>
            </div>
            <TradeTable />
          </div>
          <div className="w-[3px] bg-[#e4e4e4]" />
          <div className="flex-1 bg-[#999]" />
        </div>
      </div>
    </div>
  );
}
